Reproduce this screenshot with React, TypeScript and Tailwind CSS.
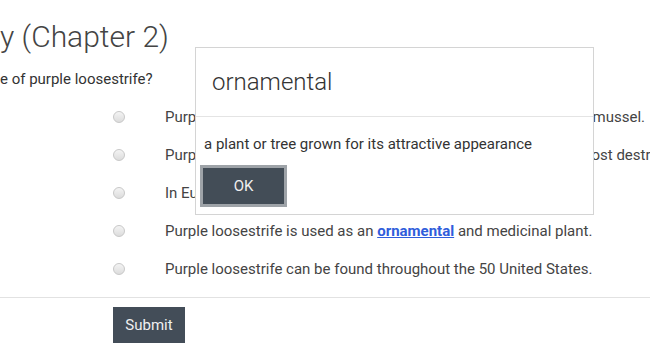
import React from 'react';

const options = [
  { text: 'Purple loosestrife is a native plant which helps control the zebra mussel.' },
  { text: 'Purple loosestrife is, today, widely considered to be one of the most destructive invasive plants.' },
  { text: 'In Europe, purple loosestrife is considered a weed.' },
  { text: 'link' },
  { text: 'Purple loosestrife can be found throughout the 50 United States.' },
];

function Radio() {
  return (
    <span className="block h-[12px] w-[12px] rounded-full border border-[#c8c8c8] bg-gradient-to-b from-[#f4f4f4] to-[#dcdcdc]" />
  );
}

export default function App() {
  return (
    <div className="relative h-[363px] w-[650px] overflow-hidden bg-white font-['Roboto',sans-serif] text-[#444]">
      <h1 className="mt-[16px] whitespace-nowrap text-[30px] font-light leading-[42px] text-[#444]">
        y (Chapter 2)
      </h1>
      <p className="mt-[11px] whitespace-nowrap text-[15px] leading-[20px] text-[#333]">
        e of purple loosestrife?
      </p>

      <ul className="mt-[9px] pl-[113px]">
        {options.map((opt, i) => (
          <li key={i} className="flex h-[38px] items-center whitespace-nowrap text-[15px] text-[#444]">
            <span className="w-[52px] shrink-0">
              <Radio />
            </span>
            {opt.text === 'link' ? (
              <span>
                Purple loosestrife is used as an{' '}
                <a className="font-bold text-[#2f5ddb] underline">ornamental</a> and medicinal plant.
              </span>
            ) : (
              <span>{opt.text}</span>
            )}
          </li>
        ))}
      </ul>

      <div className="mt-[9px] border-t border-[#e2e2e2] pl-[113px] pt-[9px]">
        <button className="h-[36px] w-[72px] bg-[#434d58] text-[15px] text-[#f0f0f0]">Submit</button>
      </div>

      <div className="absolute left-[195px] top-[47px] h-[168px] w-[399px] border border-[#d4d4d4] bg-white">
        <div className="flex h-[69px] items-center border-b border-[#e4e4e4] pl-[16px]">
          <span className="text-[24px] font-light text-[#333]">ornamental</span>
        </div>
        <p className="mt-[17px] pl-[8px] text-[15px] leading-[20px] text-[#333]">
          a plant or tree grown for its attractive appearance
        </p>
        <button className="ml-[4px] mt-[11px] h-[42px] w-[87px] border-[3px] border-[#9ea3a8] bg-[#434d57] text-[15px] text-[#f0f0f0]">
          OK
        </button>
      </div>
    </div>
  );
}
